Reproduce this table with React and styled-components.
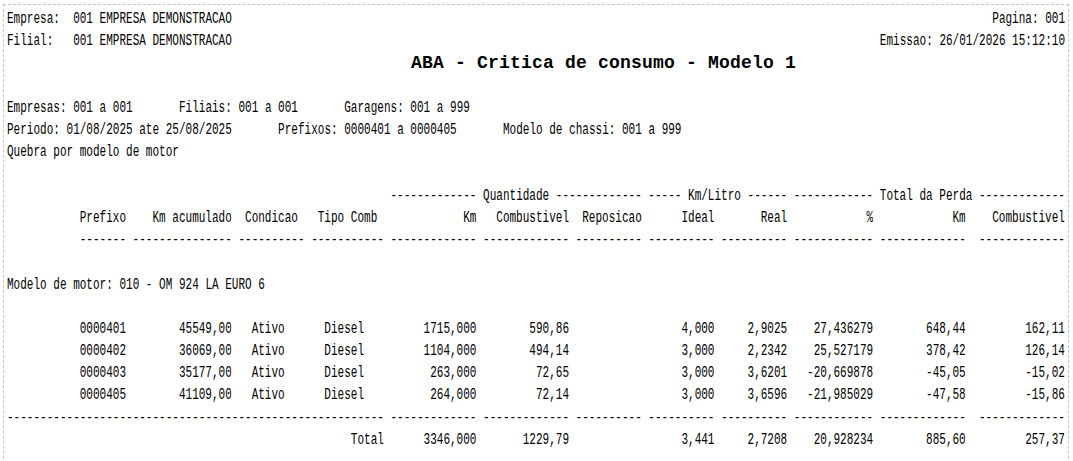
import React from "react";
import styled, { createGlobalStyle } from "styled-components";

// the report font is a monospace squeezed sideways: 16px glyphs on a 6.61px pitch
const squeeze = 0.6887;
const pitch = "22.15px";

const GlobalStyle = createGlobalStyle`
  html, body {
    margin: 0;
    background: #ffffff;
  }
  body {
    font-family: "Liberation Mono", "Courier New", monospace;
    color: #000000;
  }
`;

const Page = styled.div`
  box-sizing: border-box;
  width: 1066px;
  min-height: 620px;
  margin: 4px 0 0 3px;
  padding: 3px 3px 0 3px;
  border: 1px dashed #c4c4c4;
  overflow: hidden;
`;

const Compressed = styled.div`
  width: 160ch;
  font-size: 16px;
  line-height: ${pitch};
  white-space: pre;
  transform: scaleX(${squeeze});
  transform-origin: left top;
`;

const Line = styled.div`
  height: ${pitch};
`;

const HeaderLine = styled(Line)`
  display: flex;
  justify-content: space-between;
`;

const Params = styled(Line)`
  display: flex;
  gap: 7ch;
`;

const Title = styled.h1`
  margin: 0;
  padding-left: 404px;
  height: ${pitch};
  font: bold 18px/${pitch} "Liberation Mono", "Courier New", monospace;
  letter-spacing: 0.2px;
  white-space: pre;
`;

const TableRow = styled.div`
  display: grid;
  grid-template-columns: 10ch 7ch 15ch 10ch 11ch 13ch 13ch 10ch 10ch 10ch 12ch 13ch 14ch;
  column-gap: 1ch;
  height: ${pitch};
`;

const Cell = styled.span`
  grid-column: span ${(p) => p.$span || 1};
  text-align: ${(p) => p.$align || "left"};
  white-space: pre;
  overflow: hidden;
`;

const dash = (n) => "-".repeat(n);
const center = (t, w) => " ".repeat(Math.floor((w - t.length) / 2)) + t;

const columns = [
  { w: 7, align: "left", label: "Prefixo" },
  { w: 15, align: "right", label: "Km acumulado" },
  { w: 10, center: true, label: "Condicao" },
  { w: 11, center: true, label: "Tipo Comb" },
  { w: 13, align: "right", label: "Km" },
  { w: 13, align: "right", label: "Combustivel" },
  { w: 10, align: "right", label: "Reposicao" },
  { w: 10, align: "right", label: "Ideal" },
  { w: 10, align: "right", label: "Real" },
  { w: 12, align: "right", label: "%" },
  { w: 13, align: "right", label: "Km" },
  { w: 14, align: "right", label: "Combustivel", rule: 13 },
];

const rows = [
  ["0000401", "45549,00", "Ativo", "Diesel", "1715,000", "590,86", "", "4,000", "2,9025", "27,436279", "648,44", "162,11"],
  ["0000402", "36069,00", "Ativo", "Diesel", "1104,000", "494,14", "", "3,000", "2,2342", "25,527179", "378,42", "126,14"],
  ["0000403", "35177,00", "Ativo", "Diesel", "263,000", "72,65", "", "3,000", "3,6201", "-20,669878", "-45,05", "-15,02"],
  ["0000405", "41109,00", "Ativo", "Diesel", "264,000", "72,14", "", "3,000", "3,6596", "-21,985029", "-47,58", "-15,86"],
];

const totals = ["3346,000", "1229,79", "", "3,441", "2,7208", "20,928234", "885,60", "257,37"];

const renderCells = (values) =>
  columns.map((c, i) => (
    <Cell key={i} $align={c.center ? "left" : c.align}>
      {c.center ? center(values[i], c.w) : values[i]}
    </Cell>
  ));

const App = () => {
  return (
    <>
      <GlobalStyle />
      <Page>
        <Compressed>
          <HeaderLine>
            <span>Empresa:  001 EMPRESA DEMONSTRACAO</span>
            <span>Pagina: 001</span>
          </HeaderLine>
          <HeaderLine>
            <span>Filial:   001 EMPRESA DEMONSTRACAO</span>
            <span>Emissao: 26/01/2026 15:12:10</span>
          </HeaderLine>
        </Compressed>
        <Title>ABA - Critica de consumo - Modelo 1</Title>
        <Compressed>
          <Line />
          <Params>
            <span>Empresas: 001 a 001</span>
            <span>Filiais: 001 a 001</span>
            <span>Garagens: 001 a 999</span>
          </Params>
          <Params>
            <span>Periodo: 01/08/2025 ate 25/08/2025</span>
            <span>Prefixos: 0000401 a 0000405</span>
            <span>Modelo de chassi: 001 a 999</span>
          </Params>
          <Line>Quebra por modelo de motor</Line>
          <Line />

          <TableRow>
            <Cell $span={5} />
            <Cell $span={3}>{`${dash(13)} Quantidade ${dash(13)}`}</Cell>
            <Cell $span={2}>{`${dash(5)} Km/Litro ${dash(6)}`}</Cell>
            <Cell $span={3}>{`${dash(12)} Total da Perda ${dash(13)}`}</Cell>
          </TableRow>
          <TableRow>
            <Cell />
            {renderCells(columns.map((c) => c.label))}
          </TableRow>
          <TableRow>
            <Cell />
            {columns.map((c, i) => (
              <Cell key={i} $align="right">
                {dash(c.rule || c.w)}
              </Cell>
            ))}
          </TableRow>
          <Line />
          <Line>Modelo de motor: 010 - OM 924 LA EURO 6</Line>
          <Line />

          {rows.map((r) => (
            <TableRow key={r[0]}>
              <Cell />
              {renderCells(r)}
            </TableRow>
          ))}

          <TableRow>
            <Cell $span={5}>{dash(57)}</Cell>
            {columns.slice(4).map((c, i) => (
              <Cell key={i} $align="right">
                {dash(c.rule || c.w)}
              </Cell>
            ))}
          </TableRow>
          <TableRow>
            <Cell $span={4} />
            <Cell $align="right">Total</Cell>
            {totals.map((t, i) => (
              <Cell key={i} $align="right">
                {t}
              </Cell>
            ))}
          </TableRow>
        </Compressed>
      </Page>
    </>
  );
};

export default App;
